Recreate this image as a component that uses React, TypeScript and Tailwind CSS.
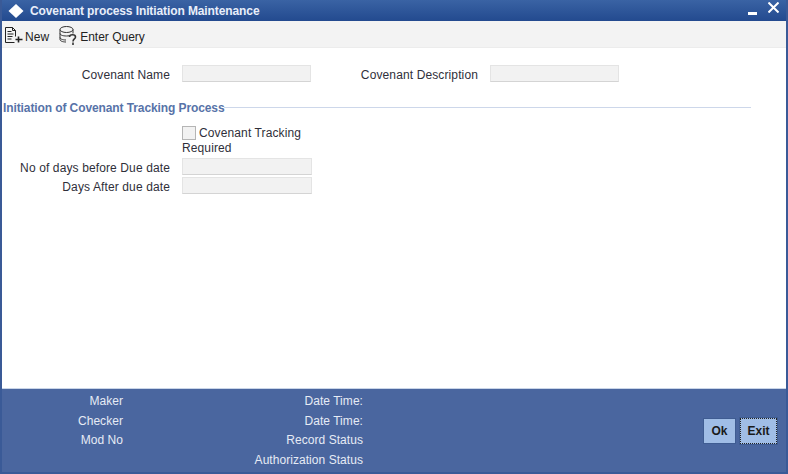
import React from 'react';

function Label({ children, width }: { children: React.ReactNode; width: string }) {
  return <span className={`${width} shrink-0 text-right`}>{children}</span>;
}

function Field({ width }: { width: string }) {
  return <div className={`${width} h-[17px] shrink-0 border border-[#e4e4e4] border-b-[#d4d4d4] bg-[#f2f2f2]`} />;
}

function NewIcon() {
  return (
    <svg width="18" height="17" viewBox="0 0 18 17" fill="none" stroke="#222" strokeWidth="1">
      <path d="M.5.5h7l3 3v6M.5.5v15h9" />
      <path d="M7.5.5v3h3M2.5 4.5h4M2.5 7h6M2.5 9.5h5M2.5 12h4" />
      <path d="M13.5 9.5v6M10.5 12.5h7" strokeWidth="1.6" />
    </svg>
  );
}

function QueryIcon() {
  return (
    <svg width="18" height="19" viewBox="0 0 18 19" fill="none" stroke="#333" strokeWidth="1">
      <ellipse cx="7.5" cy="3.5" rx="6.5" ry="3" />
      <path d="M1 3.5v10c0 1.4 2.5 2.5 6 2.5M14 3.5v4M1 7.5c0 1.4 2.5 2.5 6.5 2.5 1 0 2-.1 3-.4M1 11.5c0 1.4 2.5 2.5 6 2.5" />
      <path d="M10.5 11c0-3 6-3 6 0 0 2-2.5 2-2.5 4.5M14 16.5v2.5" strokeWidth="1.6" />
    </svg>
  );
}

export default function App() {
  return (
    <div className="flex h-[474px] w-[788px] flex-col overflow-hidden border-x-2 border-[#3a5a97] bg-white font-['Liberation_Sans',Arial,sans-serif] text-xs text-[#2f2f3a]">
      {/* Title bar */}
      <div className="-mx-0.5 flex h-[21px] shrink-0 items-center bg-gradient-to-b from-[#3a63a4] to-[#234a8f] pl-2 pr-[9px] text-white">
        <svg width="16" height="14" viewBox="0 0 16 14" className="shrink-0">
          <path d="M8 0l7.5 7L8 14 .5 7z" fill="#fff" />
        </svg>
        <span className="ml-1.5 text-xs font-bold tracking-[-0.1px] text-[#e8eefa]">Covenant process Initiation Maintenance</span>
        <div className="ml-auto flex items-center gap-[11px]">
          <div className="mt-[5px] h-[3px] w-[9px] bg-white" />
          <svg width="11" height="11" viewBox="0 0 11 11" stroke="#fff" strokeWidth="2" className="-mt-1.5">
            <path d="M.5.5l10 10M10.5.5l-10 10" />
          </svg>
        </div>
      </div>

      {/* Toolbar */}
      <div className="flex h-[27px] shrink-0 items-center border-b border-[#ececec] bg-[#f3f3f3] pl-[3px] text-[#222]">
        <div className="mt-0.5"><NewIcon /></div>
        <span className="ml-[2px] mt-1.5 tracking-[0.05px]">New</span>
        <div className="ml-[10px] mt-0.5"><QueryIcon /></div>
        <span className="ml-[3px] mt-1.5">Enter Query</span>
      </div>

      {/* Form */}
      <div className="flex-1 tracking-[0.12px]">
        <div className="mt-[17px] flex h-[17px] items-center">
          <Label width="w-[168px] pt-[2px]">Covenant Name</Label>
          <div className="ml-3"><Field width="w-[129px]" /></div>
          <Label width="w-[167px] pt-[2px]">Covenant Description</Label>
          <div className="ml-3"><Field width="w-[129px]" /></div>
        </div>

        <div className="mt-[18px] flex w-[749px] items-center">
          <span className="ml-px font-bold tracking-[-0.1px] text-[#5773a8]">Initiation of Covenant Tracking Process</span>
          <div className="-mt-0.5 h-px flex-1 bg-[#cdd7ea]" />
        </div>

        <div className="ml-[180px] mt-[10px] w-[130px] leading-[15px]">
          <input type="checkbox" className="float-left mr-[3px] h-[14px] w-[14px] appearance-none border border-[#b5b5b5] bg-[#f2f2f2]" />
          <span>Covenant Tracking Required</span>
        </div>

        <div className="mt-0.5 flex h-[17px] items-center">
          <Label width="w-[168px] pt-[2px]">No of days before Due date</Label>
          <div className="ml-3"><Field width="w-[130px]" /></div>
        </div>
        <div className="mt-0.5 flex h-[17px] items-center">
          <Label width="w-[168px] pt-[2px]">Days After due date</Label>
          <div className="ml-3"><Field width="w-[130px]" /></div>
        </div>
      </div>

      {/* Footer */}
      <div className="flex h-[86px] shrink-0 items-center border-t border-[#c9d5e8] border-b-2 border-b-[#3a5a97] bg-[#4a669f] pr-[9px] text-[#e6ebf5]">
        <div className="flex flex-col gap-[5.4px] leading-[14px] tracking-[0.05px]">
          <Label width="w-[121px]">Maker</Label>
          <Label width="w-[121px]">Checker</Label>
          <Label width="w-[121px]">Mod No</Label>
          <span className="h-[14px]" />
        </div>
        <div className="flex flex-col gap-[5.4px] leading-[14px] tracking-[0.05px]">
          <Label width="w-[240px]">Date Time:</Label>
          <Label width="w-[240px]">Date Time:</Label>
          <Label width="w-[240px]">Record Status</Label>
          <Label width="w-[240px]">Authorization Status</Label>
        </div>
        <div className="ml-auto flex items-center gap-1 font-bold text-[#1a1a1a]">
          <button className="h-[26px] w-[33px] border border-[#3f5c92] bg-[#a0bde6]">Ok</button>
          <button className="h-[26px] w-[37px] border border-dotted border-[#222] bg-[#a0bde6] shadow-[0_0_0_1px_#3f5c92]">Exit</button>
        </div>
      </div>
    </div>
  );
}
